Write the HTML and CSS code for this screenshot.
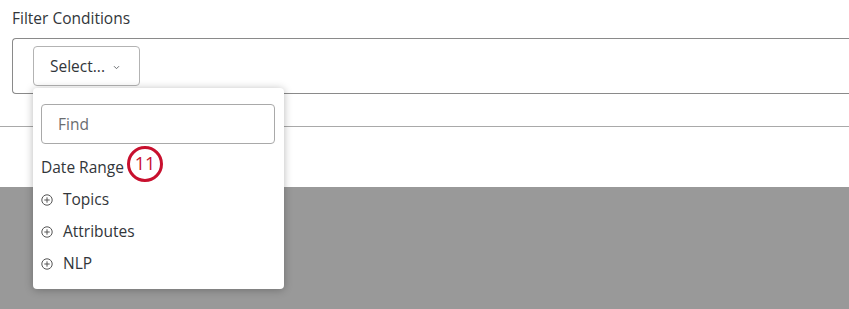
FILE: index.html
```html
<!DOCTYPE html>
<html>
<head>
<meta charset="utf-8">
<link rel="stylesheet" href="styles.css">
</head>
<body>
<div class="page">
  <section class="panel">
    <div class="label">Filter Conditions</div>
    <div class="filter-box">
      <button class="select-btn">Select...
        <svg class="chev" width="7" height="5" viewBox="0 0 7 5"><path d="M1 1.2 L3.5 3.7 L6 1.2" fill="none" stroke="#6a6d70" stroke-width="1"/></svg>
      </button>
    </div>
  </section>
  <div class="spacer"></div>
  <div class="backdrop"></div>

  <div class="dropdown">
    <div class="find">Find</div>
    <div class="item date">Date Range <span class="badge">11</span></div>
    <div class="item"><svg class="plus" width="12" height="12" viewBox="0 0 12 12"><circle cx="6" cy="6" r="5.2" fill="none" stroke="#555" stroke-width="1"/><path d="M6 3.3V8.7M3.3 6H8.7" stroke="#555" stroke-width="1"/></svg>Topics</div>
    <div class="item"><svg class="plus" width="12" height="12" viewBox="0 0 12 12"><circle cx="6" cy="6" r="5.2" fill="none" stroke="#555" stroke-width="1"/><path d="M6 3.3V8.7M3.3 6H8.7" stroke="#555" stroke-width="1"/></svg>Attributes</div>
    <div class="item"><svg class="plus" width="12" height="12" viewBox="0 0 12 12"><circle cx="6" cy="6" r="5.2" fill="none" stroke="#555" stroke-width="1"/><path d="M6 3.3V8.7M3.3 6H8.7" stroke="#555" stroke-width="1"/></svg>NLP</div>
  </div>
</div>
</body>
</html>
```

FILE: styles.css
```css
* { box-sizing: border-box; }
html, body { margin: 0; padding: 0; }
body {
  width: 849px;
  height: 309px;
  overflow: hidden;
  background: #fff;
  font-family: "Open Sans", "Noto Sans", sans-serif;
  font-size: 15.5px;
  color: #32363a;
}
.page { position: relative; height: 309px; display: flex; flex-direction: column; }
.panel {
  height: 127px;
  border-bottom: 1px solid #a9a9a9;
  padding-left: 12px;
}
.label {
  height: 38px;
  padding-top: 8px;
  font-size: 15.5px;
  line-height: 20px;
}
.filter-box {
  height: 56px;
  border: 1px solid #8a8a8a;
  border-right: none;
  border-radius: 4px 0 0 4px;
  padding: 7px 0 0 20px;
}
.select-btn {
  display: flex;
  align-items: center;
  width: 107px;
  height: 40px;
  border: 1px solid #b3b3b3;
  border-radius: 4px;
  background: #fff;
  padding: 0 0 0 16px;
  font-family: inherit;
  font-size: 15.5px;
  color: #32363a;
}
.chev { margin-left: 8px; margin-top: 2px; }
.spacer { height: 60px; }
.backdrop { flex: 1; background: #999999; }

.dropdown {
  position: absolute;
  left: 33px;
  top: 88px;
  width: 251px;
  height: 201px;
  background: #fff;
  border-radius: 4px;
  box-shadow: 0 1px 8px rgba(0,0,0,0.28);
  padding: 16px 9px 0 8px;
}
.find {
  height: 40px;
  border: 1px solid #a9a9a9;
  border-radius: 4px;
  padding-left: 16px;
  display: flex;
  align-items: center;
  font-size: 15.5px;
  color: #6a6d70;
  margin-bottom: 7px;
}
.item {
  height: 32px;
  display: flex;
  align-items: center;
  font-size: 15.5px;
}
.plus { margin-right: 10px; margin-top: 1px; }
.badge {
  display: inline-flex;
  align-items: center;
  justify-content: center;
  width: 36px;
  height: 36px;
  margin-left: 3px;
  margin-top: -7px;
  border: 3px solid #c8102e;
  border-radius: 50%;
  color: #c8102e;
  font-size: 18px;
  padding-bottom: 1px;
}
```
